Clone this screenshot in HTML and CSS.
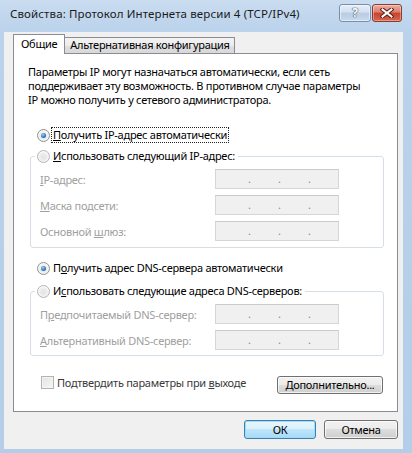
FILE: index.html
```html
<!DOCTYPE html>
<html lang="ru">
<head>
<meta charset="utf-8">
<title>Свойства: Протокол Интернета версии 4 (TCP/IPv4)</title>
<link rel="stylesheet" href="styles.css">
</head>
<body>
<div class="window">
  <div class="titlebar">
    <span class="title">Свойства: Протокол Интернета версии 4 (TCP/IPv4)</span>
    <div class="caption-btns">
      <span class="cbtn help">?</span>
      <span class="cbtn close">
        <svg width="14" height="10" viewBox="0 0 14 10"><path d="M2.5 1.5 L11.5 8.5 M11.5 1.5 L2.5 8.5" stroke="#5a1a12" stroke-width="4" stroke-linecap="square"/><path d="M2.5 1.5 L11.5 8.5 M11.5 1.5 L2.5 8.5" stroke="#fff" stroke-width="2" stroke-linecap="square"/></svg>
      </span>
    </div>
  </div>
  <div class="client">
    <div class="tabs">
      <div class="tab active">Общие</div>
      <div class="tab">Альтернативная конфигурация</div>
    </div>
    <div class="panel">
      <p class="intro">Параметры IP могут назначаться автоматически, если сеть<br>поддерживает эту возможность. В противном случае параметры<br>IP можно получить у сетевого администратора.</p>

      <div class="option opt-top"><span class="radio checked"></span><span class="focus"><u>П</u>олучить IP-адрес автоматически</span></div>

      <fieldset class="group group-ip">
        <legend class="option"><span class="radio"></span><span><u>И</u>спользовать следующий IP-адрес:</span></legend>
        <div class="fields">
          <span class="flabel"><u>I</u>P-адрес:</span>
          <div class="ipbox"><span class="dot">.</span><span class="dot">.</span><span class="dot">.</span></div>
          <span class="flabel"><u>М</u>аска подсети:</span>
          <div class="ipbox"><span class="dot">.</span><span class="dot">.</span><span class="dot">.</span></div>
          <span class="flabel">Основной <u>ш</u>люз:</span>
          <div class="ipbox"><span class="dot">.</span><span class="dot">.</span><span class="dot">.</span></div>
        </div>
      </fieldset>

      <div class="option opt-dns"><span class="radio checked"></span><span>П<u>о</u>лучить адрес DNS-сервера автоматически</span></div>

      <fieldset class="group group-dns">
        <legend class="option"><span class="radio"></span><span>И<u>с</u>пользовать следующие адреса DNS-серверов:</span></legend>
        <div class="fields">
          <span class="flabel">П<u>р</u>едпочитаемый DNS-сервер:</span>
          <div class="ipbox"><span class="dot">.</span><span class="dot">.</span><span class="dot">.</span></div>
          <span class="flabel"><u>А</u>льтернативный DNS-сервер:</span>
          <div class="ipbox"><span class="dot">.</span><span class="dot">.</span><span class="dot">.</span></div>
        </div>
      </fieldset>

      <div class="check-row">
        <div class="check"><span class="checkbox"></span><span class="check-text">Подтвердить параметры при <u>в</u>ыходе</span></div>
        <button class="btn adv"><span><u>Д</u>ополнительно...</span></button>
      </div>
    </div>
    <div class="dlg-btns">
      <button class="btn default ok">ОК</button>
      <button class="btn cancel">Отмена</button>
    </div>
  </div>
</div>
</body>
</html>
```

FILE: styles.css
```css
html, body {
  margin: 0;
  padding: 0;
}
body {
  background: #b9d1ea;
  font-family: "Noto Sans", "Open Sans", "DejaVu Sans", sans-serif;
  font-size: 11px;
  letter-spacing: -0.27px;
  color: #000;
}
.window {
  width: 412px;
  height: 453px;
  display: flex;
  flex-direction: column;
  background: linear-gradient(#cadcf0, #bad2eb 32px, #b4cde8);
  overflow: hidden;
}
.titlebar {
  flex: none;
  height: 32px;
  display: flex;
  justify-content: space-between;
  align-items: flex-start;
  padding: 0 10px;
}
.title {
  font-size: 11.5px;
  letter-spacing: 0.12px;
  line-height: 14px;
  margin-top: 7px;
  color: #1a1a1a;
  white-space: nowrap;
}
.caption-btns {
  display: flex;
  gap: 1px;
  margin-top: 4px;
}
.cbtn {
  box-sizing: border-box;
  height: 18px;
  border-radius: 3px;
  display: flex;
  align-items: center;
  justify-content: center;
  letter-spacing: 0;
}
.help {
  width: 32px;
  border: 1px solid #7590ae;
  background: linear-gradient(#e6eef8, #d3e0ef 45%, #b9cce3 50%, #c9d9eb);
  box-shadow: inset 0 0 0 1px rgba(255,255,255,0.5);
  color: #fff;
  font-weight: bold;
  font-size: 12px;
  line-height: 16px;
  text-shadow: 0 0 1px #3c4f66, 0 0 1px #3c4f66, 0 0 1px #3c4f66;
}
.close {
  width: 30px;
  border: 1px solid #8b3a2e;
  background: linear-gradient(#eab0a4, #dc7d6a 45%, #c7432c 50%, #d6664f);
  box-shadow: inset 0 0 0 1px rgba(255,255,255,0.35);
}
.client {
  flex: 1;
  margin: 0 9px 4px 4px;
  background: #f0f0f0;
  padding: 2px 5px 0 9px;
  display: flex;
  flex-direction: column;
}
.tabs {
  flex: none;
  height: 19px;
  display: flex;
  align-items: flex-end;
  position: relative;
  z-index: 1;
}
.tab {
  box-sizing: border-box;
  height: 16px;
  line-height: 13px;
  padding: 0 4px 0 5px;
  border: 1px solid #898c95;
  border-bottom: none;
  background: linear-gradient(#f3f3f3, #ececec 50%, #e0e0e0 50%, #d8d8d8);
  white-space: nowrap;
}
.tab.active {
  height: 20px;
  line-height: 17px;
  padding: 0 7px;
  background: #fff;
  margin-bottom: -1px;
  border-top-left-radius: 1px;
  border-top-right-radius: 1px;
}
.tab.active + .tab {
  border-left: none;
}
.panel {
  flex: none;
  box-sizing: border-box;
  height: 359px;
  border: 1px solid #898c95;
  background: #fff;
  padding-top: 11px;
}
.intro {
  margin: 0 0 0 14px;
  line-height: 14px;
  white-space: nowrap;
}
.option {
  display: flex;
  align-items: center;
  height: 14px;
  line-height: 14px;
  white-space: nowrap;
}
.opt-top {
  margin: 21px 0 0 23px;
}
.opt-dns {
  margin: 13px 0 0 23px;
}
.radio {
  flex: none;
  box-sizing: border-box;
  width: 13px;
  height: 13px;
  margin-right: 3px;
  border-radius: 50%;
  border: 1px solid #909090;
  background: radial-gradient(circle at 50% 55%, #e2e2e2 0, #eeeeee 45%, #fbfbfb 75%);
  display: flex;
  align-items: center;
  justify-content: center;
}
.radio.checked::after {
  content: "";
  width: 5px;
  height: 5px;
  border-radius: 50%;
  background: radial-gradient(circle at 40% 35%, #a2d0f5, #2a74b8 60%, #154f8a);
}
.group .radio {
  border-color: #b5b5b5;
}
.focus {
  outline: 1px dotted #222;
  padding: 0 1px;
  margin-left: -1px;
}
.group {
  border: 1px solid #d5dfe5;
  border-radius: 3px;
  margin: 7px 13px 0 16px;
  padding: 6px 9px 6px 9px;
  min-width: 0;
}
.group-dns {
  margin-top: 9px;
  padding-bottom: 5px;
}
.group legend {
  padding: 0 3px 0 2px;
  margin-left: -5px;
}
.fields {
  display: grid;
  grid-template-columns: 175px 124px;
  row-gap: 6px;
  align-items: center;
}
.flabel {
  color: #a0a0a0;
  white-space: nowrap;
}
.ipbox {
  box-sizing: border-box;
  height: 20px;
  border: 1px solid #d6d6d6;
  border-top-color: #cacaca;
  background: #f0f0f0;
  display: flex;
  align-items: center;
  padding-left: 32px;
  gap: 27px;
  color: #8a8a8a;
  line-height: 14px;
  letter-spacing: 0;
}
.dot {
  width: 3px;
}
.check-row {
  display: flex;
  justify-content: space-between;
  align-items: flex-start;
  margin: 20px 14px 0 27px;
}
.check {
  display: flex;
  align-items: center;
  height: 13px;
}
.checkbox {
  box-sizing: border-box;
  width: 13px;
  height: 13px;
  border: 1px solid #b3b3b3;
  background: linear-gradient(135deg, #e3e3e3, #f7f7f7);
  box-shadow: inset 0 0 0 1px #f4f4f4;
  margin-right: 3px;
}
.check-text {
  color: #3a3a3a;
  line-height: 14px;
  white-space: nowrap;
}
.btn {
  box-sizing: border-box;
  height: 18px;
  border: 1px solid #707070;
  border-radius: 3px;
  background: linear-gradient(#f2f2f2, #ebebeb 50%, #dddddd 50%, #cfcfcf);
  box-shadow: inset 0 0 0 1px rgba(255,255,255,0.7);
  font-family: inherit;
  font-size: 11px;
  letter-spacing: -0.27px;
  color: #000;
  padding: 0;
  display: flex;
  align-items: center;
  justify-content: center;
  line-height: 14px;
  white-space: nowrap;
}
.adv {
  width: 106px;
}
.dlg-btns {
  display: flex;
  justify-content: flex-end;
  gap: 8px;
  margin-top: 8px;
}
.ok, .cancel {
  height: 19px;
}
.ok {
  width: 72px;
}
.cancel {
  width: 74px;
}
.btn.default {
  border-color: #3c7fb1;
  background: linear-gradient(#eaf6fd, #d9f0fc 50%, #bee6fd 50%, #a7d9f5);
  box-shadow: inset 0 0 0 1px #9fdcf6;
}
```
